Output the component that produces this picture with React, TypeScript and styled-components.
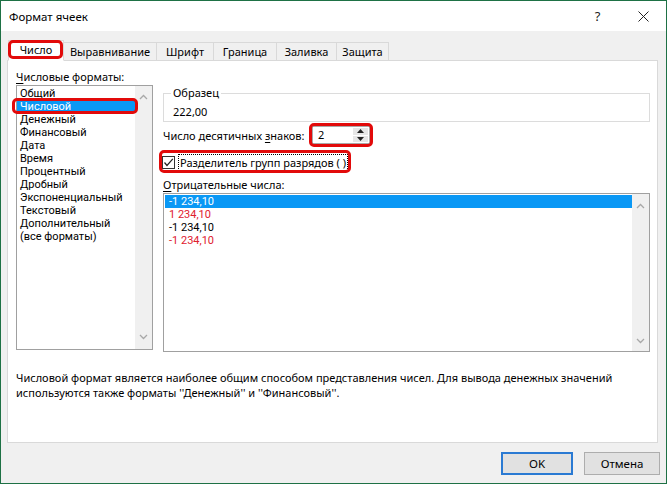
import React from "react";
import styled, { createGlobalStyle, css } from "styled-components";

const GlobalStyle = createGlobalStyle`
  html, body { margin: 0; padding: 0; background: #f0f0f0; }
  body {
    font-family: "Noto Sans", "Open Sans", "DejaVu Sans", sans-serif;
    font-size: 11px;
    color: #000;
  }
  * { box-sizing: border-box; }
`;

const RED = "#e20a0a";
const BLUE = "#0a98f5";

const redFrame = (t: number, r: number, b: number, l: number) => css`
  position: relative;
  &::after {
    content: "";
    position: absolute;
    top: ${-t}px;
    right: ${-r}px;
    bottom: ${-b}px;
    left: ${-l}px;
    border: 3px solid ${RED};
    border-radius: 5px;
    pointer-events: none;
    z-index: 3;
  }
`;

const Window = styled.div`
  width: 667px;
  height: 484px;
  border: 1px solid #1e7145;
  background: #f0f0f0;
  display: flex;
  flex-direction: column;
  overflow: hidden;
`;

const TitleBar = styled.div`
  height: 30px;
  flex: none;
  background: #fff;
  display: flex;
  align-items: center;
  padding-left: 8px;
`;

const Title = styled.div`
  flex: 1;
  font-size: 11.5px;
`;

const TitleButton = styled.div<{ $w: number }>`
  width: ${(p) => p.$w}px;
  height: 100%;
  display: flex;
  align-items: center;
  justify-content: center;
  font-size: 13px;
  color: #222;
`;

const Body = styled.div`
  flex: 1;
  display: flex;
  flex-direction: column;
  padding: 9px 8px 0 6px;
`;

const TabRow = styled.div`
  display: flex;
  align-items: flex-end;
  height: 21px;
  padding-left: 1px;
  margin-bottom: -1px;
  position: relative;
  z-index: 2;
`;

const Tab = styled.div<{ $w: number; $active?: boolean }>`
  width: ${(p) => p.$w}px;
  height: 19px;
  margin-left: -1px;
  display: flex;
  align-items: center;
  justify-content: center;
  border: 1px solid #d9d9d9;
  background: #f0f0f0;
  padding-bottom: 1px;
  white-space: nowrap;
  &:first-child { margin-left: 0; }
  ${(p) =>
    p.$active &&
    css`
      height: 21px;
      background: #fff;
      border-bottom-color: #fff;
      padding-bottom: 2px;
      ${redFrame(1, 0, -1, 1)}
    `}
`;

const Panel = styled.div`
  height: 383px;
  flex: none;
  background: #fff;
  border: 1px solid #d9d9d9;
  padding: 8px 6px 0 8px;
  display: flex;
  flex-direction: column;
`;

const TopSection = styled.div`
  display: grid;
  grid-template-columns: 137px 487px;
  column-gap: 10px;
`;

const Column = styled.div`
  display: flex;
  flex-direction: column;
  align-items: flex-start;
`;

const Label = styled.div<{ $mt?: number }>`
  line-height: 15px;
  height: 15px;
  margin-top: ${(p) => p.$mt ?? 0}px;
  margin-bottom: 1px;
  white-space: nowrap;
  u { text-underline-offset: 2px; }
`;

const ListBox = styled.div<{ $h: number }>`
  width: 100%;
  height: ${(p) => p.$h}px;
  border: 1px solid #a0a0a0;
  background: #fff;
  display: flex;
`;

const ListItems = styled.div<{ $pad: number }>`
  flex: 1;
  padding: 1px 0 0 ${(p) => p.$pad}px;
  display: flex;
  flex-direction: column;
  font-family: Roboto, "Noto Sans", sans-serif;
  font-size: 11px;
`;

const ListItem = styled.div<{ $selected?: boolean; $red?: boolean; $indent: number; $marked?: boolean }>`
  height: 13px;
  line-height: 13px;
  padding-left: ${(p) => p.$indent}px;
  white-space: nowrap;
  color: ${(p) => (p.$selected ? "#fff" : p.$red ? "#e0202e" : "#000")};
  background: ${(p) => (p.$selected ? BLUE : "transparent")};
  ${(p) => p.$marked && redFrame(2, 3, 1, 5)}
`;

const ScrollTrack = styled.div<{ $top: number; $bottom: number }>`
  width: 17px;
  background: #f0f0f0;
  display: flex;
  flex-direction: column;
  align-items: center;
  justify-content: space-between;
  padding: ${(p) => p.$top}px 0 ${(p) => p.$bottom}px;
`;

const SampleBox = styled.fieldset`
  margin: 17px 0 0;
  width: 100%;
  border: 1px solid #dcdcdc;
  padding: 0 8px 2px 7px;
  min-inline-size: 0;
`;

const Legend = styled.legend`
  padding: 0 2px;
  line-height: 14px;
`;

const SampleValue = styled.div`
  margin-top: 5px;
  line-height: 14px;
  padding-left: 2px;
`;

const DecimalRow = styled.div`
  margin-top: 4px;
  height: 18px;
  display: flex;
  align-items: center;
`;

const DecimalLabel = styled.div`
  width: 149px;
  white-space: nowrap;
  u { text-underline-offset: 2px; }
`;

const Spinner = styled.div`
  width: 58px;
  height: 18px;
  border: 1px solid #a9a9a9;
  background: #fff;
  display: flex;
  ${redFrame(4, 4, 4, 4)}
`;

const SpinValue = styled.div`
  flex: 1;
  padding-left: 5px;
  line-height: 16px;
`;

const SpinButtons = styled.div`
  width: 16px;
  display: flex;
  flex-direction: column;
  padding: 1px 1px 1px 0;
  gap: 1px;
`;

const SpinButton = styled.div`
  flex: 1;
  background: #e6e6e6;
  display: flex;
  align-items: center;
  justify-content: center;
`;

const CheckRow = styled.div`
  margin-top: 10px;
  height: 16px;
  display: inline-flex;
  align-items: center;
  gap: 4px;
  ${redFrame(4, 4, 3, 4)}
`;

const CheckBox = styled.div`
  width: 13px;
  height: 13px;
  margin-left: -1px;
  border: 1px solid #333;
  background: #fff;
  display: flex;
  align-items: center;
  justify-content: center;
`;

const CheckLabel = styled.div`
  outline: 1px dotted #000;
  padding: 0 1px;
  line-height: 15px;
  white-space: nowrap;
`;

const Description = styled.div`
  margin-top: 18px;
  line-height: 15px;
  white-space: nowrap;
`;

const Footer = styled.div`
  display: flex;
  justify-content: flex-end;
  gap: 11px;
  padding-top: 9px;
  margin-right: -2px;
`;

const Button = styled.div<{ $w: number; $default?: boolean }>`
  width: ${(p) => p.$w}px;
  height: 23px;
  background: #e1e1e1;
  border: ${(p) => (p.$default ? "2px solid #2a7ad3" : "1px solid #adadad")};
  display: flex;
  align-items: center;
  justify-content: center;
  font-size: 11.5px;
`;

const Chevron = ({ up }: { up?: boolean }) => (
  <svg width="9" height="6" viewBox="0 0 9 6">
    <polyline
      points={up ? "1,5 4.5,1.5 8,5" : "1,1 4.5,4.5 8,1"}
      fill="none"
      stroke="#a8a8a8"
      strokeWidth="1.3"
    />
  </svg>
);

const Tri = ({ up }: { up?: boolean }) => (
  <svg width="7" height="4" viewBox="0 0 7 4">
    <polygon points={up ? "0,4 3.5,0 7,4" : "0,0 3.5,4 7,0"} fill="#222" />
  </svg>
);

const tabs = [
  { label: "Число", w: 56 },
  { label: "Выравнивание", w: 94 },
  { label: "Шрифт", w: 58 },
  { label: "Граница", w: 64 },
  { label: "Заливка", w: 61 },
  { label: "Защита", w: 53 },
];

const formats = [
  "Общий",
  "Числовой",
  "Денежный",
  "Финансовый",
  "Дата",
  "Время",
  "Процентный",
  "Дробный",
  "Экспоненциальный",
  "Текстовый",
  "Дополнительный",
  "(все форматы)",
];

const negatives = [
  { text: "-1 234,10", red: false },
  { text: "1 234,10", red: true },
  { text: "-1 234,10", red: false },
  { text: "-1 234,10", red: true },
];

export default function App() {
  return (
    <>
      <GlobalStyle />
      <Window>
        <TitleBar>
          <Title>Формат ячеек</Title>
          <TitleButton $w={45}>?</TitleButton>
          <TitleButton $w={46}>
            <svg width="11" height="11" viewBox="0 0 11 11">
              <path d="M0.5 0.5 L10.5 10.5 M10.5 0.5 L0.5 10.5" stroke="#222" strokeWidth="1" />
            </svg>
          </TitleButton>
        </TitleBar>
        <Body>
          <TabRow>
            {tabs.map((t, i) => (
              <Tab key={t.label} $w={t.w} $active={i === 0}>
                {t.label}
              </Tab>
            ))}
          </TabRow>
          <Panel>
            <TopSection>
              <Column>
                <Label>
                  <u>Ч</u>исловые форматы:
                </Label>
                <ListBox $h={265}>
                  <ListItems $pad={0}>
                    {formats.map((f, i) => (
                      <ListItem key={f} $indent={3} $selected={i === 1} $marked={i === 1}>
                        {f}
                      </ListItem>
                    ))}
                  </ListItems>
                  <ScrollTrack $top={8} $bottom={9}>
                    <Chevron up />
                    <Chevron />
                  </ScrollTrack>
                </ListBox>
              </Column>
              <Column>
                <SampleBox>
                  <Legend>Образец</Legend>
                  <SampleValue>222,00</SampleValue>
                </SampleBox>
                <DecimalRow>
                  <DecimalLabel>
                    Число десятичных <u>з</u>наков:
                  </DecimalLabel>
                  <Spinner>
                    <SpinValue>2</SpinValue>
                    <SpinButtons>
                      <SpinButton>
                        <Tri up />
                      </SpinButton>
                      <SpinButton>
                        <Tri />
                      </SpinButton>
                    </SpinButtons>
                  </Spinner>
                </DecimalRow>
                <CheckRow>
                  <CheckBox>
                    <svg width="11" height="11" viewBox="0 0 11 11">
                      <polyline points="1.5,5.5 4,8.5 9.8,1.8" fill="none" stroke="#222" strokeWidth="1.2" />
                    </svg>
                  </CheckBox>
                  <CheckLabel>Разделитель групп разрядов ( )</CheckLabel>
                </CheckRow>
                <Label $mt={7}>
                  <u>О</u>трицательные числа:
                </Label>
                <ListBox $h={159}>
                  <ListItems $pad={1}>
                    {negatives.map((n, i) => (
                      <ListItem key={i} $indent={4} $selected={i === 0} $red={n.red}>
                        {n.text}
                      </ListItem>
                    ))}
                  </ListItems>
                  <ScrollTrack $top={9} $bottom={7}>
                    <Chevron up />
                    <Chevron />
                  </ScrollTrack>
                </ListBox>
              </Column>
            </TopSection>
            <Description>
              Числовой формат является наиболее общим способом представления чисел. Для вывода денежных значений
              <br />
              используются также форматы ''Денежный'' и ''Финансовый''.
            </Description>
          </Panel>
          <Footer>
            <Button $w={72} $default>
              OK
            </Button>
            <Button $w={76}>Отмена</Button>
          </Footer>
        </Body>
      </Window>
    </>
  );
}
